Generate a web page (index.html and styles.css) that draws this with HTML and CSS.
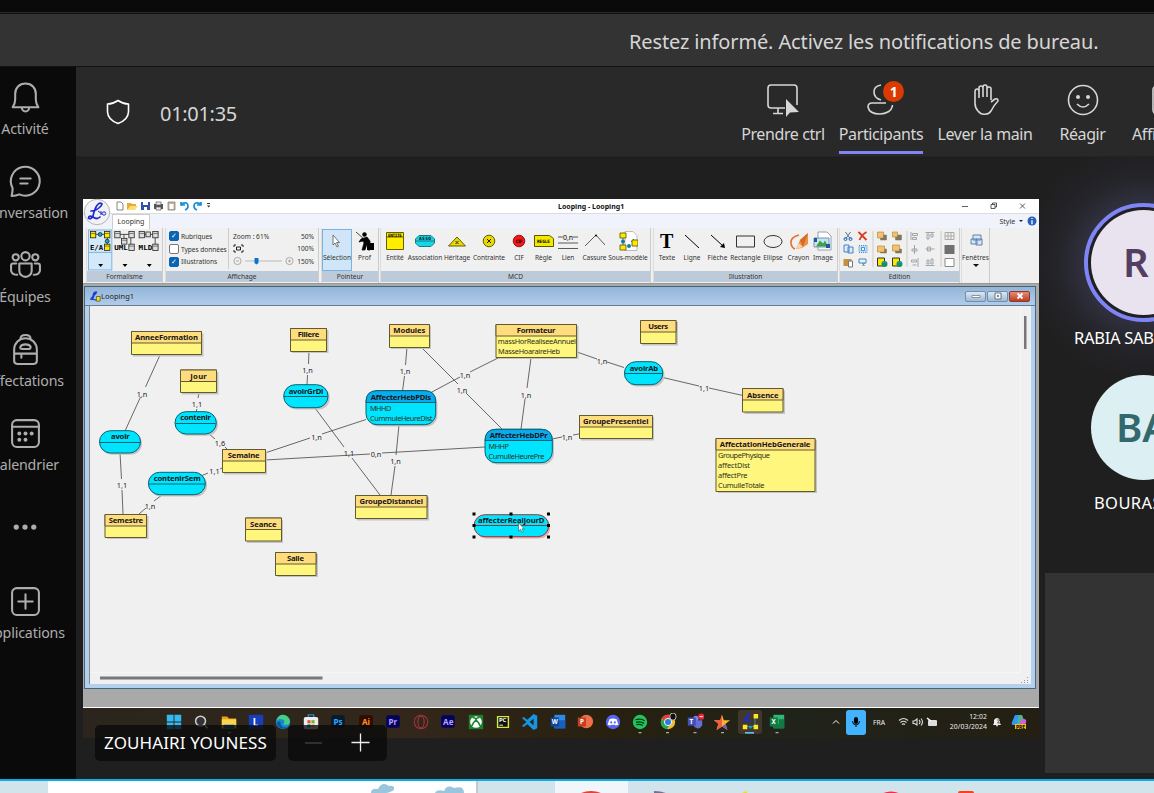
FILE: index.html
```html
<!DOCTYPE html>
<html lang="fr">
<head>
<meta charset="utf-8">
<title>Réunion</title>
<link rel="stylesheet" href="styles.css">
</head>
<body>
<div class="strip"></div>
<div class="notice"><span>Restez informé. Activez les notifications de bureau.</span></div>
<div class="main">
  <nav class="rail">
    <a class="rail-item"><svg viewBox="0 0 32 32"><path d="M3.500 25.500Q6 22 6 18V12.500C6 6.500 10 2.500 16 2.500s10 4 10 10V18Q26 22 28.500 25.500ZM12.500 26a3.500 3.500 0 0 0 7 0"/></svg><span>Activité</span></a>
    <a class="rail-item"><svg viewBox="0 0 32 32"><path d="M2.500 30Q3.500 26 3.500 22.500A14 14 0 1 1 10 28.500Q7 30 2.500 30ZM11 13H21M11 18H18"/></svg><span>Conversation</span></a>
    <a class="rail-item"><svg viewBox="0 0 32 32"><circle cx="16" cy="7" r="4"/><circle cx="6.500" cy="8" r="3"/><circle cx="25.500" cy="8" r="3"/><path d="M10 14H22V21a6 6 0 0 1-12 0ZM7 14H4Q2 14 2 16V21Q3 25 8 25M25 14H28Q30 14 30 16V21Q29 25 24 25"/></svg><span>Équipes</span></a>
    <a class="rail-item"><svg viewBox="0 0 32 32"><path d="M5 27V16a11 11 0 0 1 22 0V27Q27 30 24 30H8Q5 30 5 27ZM11 6Q11 2 16 2t5 4M5 20H27M12 20V24M13 15.500Q10.500 15.500 11 13.500 12 11 16 11t5 2.500Q21 15.500 19 15.500Z"/></svg><span>Affectations</span></a>
    <a class="rail-item"><svg viewBox="0 0 32 32"><rect x="3" y="3" width="26" height="26" rx="4.500"/><path d="M3 9.500H29"/><g class="dots"><circle cx="10" cy="16" r="1.900"/><circle cx="16" cy="16" r="1.900"/><circle cx="22" cy="16" r="1.900"/><circle cx="10" cy="22" r="1.900"/><circle cx="16" cy="22" r="1.900"/></g></svg><span>Calendrier</span></a>
    <a class="rail-item more"><svg viewBox="0 0 32 32"><g class="dots"><circle cx="6" cy="16" r="3"/><circle cx="16" cy="16" r="3"/><circle cx="26" cy="16" r="3"/></g></svg></a>
    <a class="rail-item"><svg viewBox="0 0 32 32"><rect x="3" y="3" width="26" height="26" rx="4.500"/><path d="M16 9V23M9 16H23"/></svg><span>Applications</span></a>
  </nav>
  <section class="meeting">
    <header class="bar">
      <svg class="shield" viewBox="0 0 24 26"><path d="M12 1.500Q17 5 22.500 5V13Q22 21 12 24.500 2 21 1.500 13V5Q7 5 12 1.500Z"/></svg>
      <span class="timer">01:01:35</span>
      <div class="controls">
        <a class="control"><svg viewBox="0 0 34 34"><path d="M19 25H5Q2 25 2 22V5Q2 2 5 2H28Q31 2 31 5V22M12 25V30M7 30.500H17"/><path class="arrow" d="M20 16V34L24 29.500 33 29Z"/></svg><span>Prendre ctrl</span></a>
        <a class="control active"><svg viewBox="0 0 34 34"><path d="M17 2Q10 3 10 9t7 8M22 20H8Q4 20 4 24C5 29 10 31 16 31S28 28 28.500 22"/></svg><b class="badge">1</b><span>Participants</span></a>
        <a class="control"><svg viewBox="0 0 34 34"><path d="M7 20V9Q7 6 9 6T11 9V15M11 9V5Q11 3 13 3T15 5V14M15 5V4Q15 2 17 2T19 4V14M19 6Q19 4 21 4T23 6V17M23 19L27 16Q30 15 30 18C28 20 25 24 23 28Q21 31 18 31 13 32 10 28 7 25 7 20"/></svg><span>Lever la main</span></a>
        <a class="control"><svg viewBox="0 0 34 34"><circle cx="17" cy="17" r="14.500"/><path d="M11 21Q17 27 23 21"/><g class="dots"><circle cx="12" cy="14" r="2"/><circle cx="22" cy="14" r="2"/></g></svg><span>Réagir</span></a>
        <a class="control"><svg viewBox="0 0 34 34"><rect x="2" y="3" width="30" height="28" rx="4"/></svg><span>Affichage</span></a>
      </div>
    </header>
    <div class="content">
      <div class="share">
        <div class="titlebar">
          <svg class="quick" viewBox="112 199 102 14">
            <path fill="#fff" stroke="#555" stroke-width=".7" d="M117 202h4l2 2v6h-6Z"/>
            <path fill="#e9aa35" d="M127 203h4l1 1h4v2l-2 4h-7Z"/><path fill="#ffdb78" d="M130 206h8l-3 4h-8Z"/>
            <path fill="#3450a8" d="M141 202h9v8h-9Z"/><path fill="#fff" d="M143 202h5v3h-5zM144 207h3v3h-3Z"/>
            <path fill="#555" d="M154 204h9v5h-9Z"/><path fill="#eee" stroke="#555" stroke-width=".7" d="M156 202h5v3h-5zM156 207h5v3h-5Z"/>
            <path fill="#c7b797" stroke="#777" stroke-width=".7" d="M168 202h7v8h-7Z"/><path fill="#fff" d="M169.500 204h4v5h-4Z"/>
            <path fill="none" stroke="#168ed5" stroke-width="1.700" d="M181 202v3h4M181 204q7-3 7 2 0 3-3 4M201 202v3h-4M201 204q-7-3-7 2 0 3 3 4"/>
            <path fill="#333" d="M207 203h3v1h-3zM207 205.500h3.400l-1.700 2Z"/>
          </svg>
          <strong>Looping - Looping1</strong>
          <svg class="winbtns" viewBox="0 0 70 14"><path d="M0 7.500H6M29 5.500h4v4h-4zM30.500 5.500v-1.500h4v4h-1.500M58 4.500l5 5M63 4.500l-5 5"/></svg>
        </div>
        <div class="tabstrip"><span class="tab">Looping</span><span class="style">Style <i></i></span><svg class="info" viewBox="0 0 10 10"><circle cx="5" cy="5" r="4.500" fill="#2761b9"/><path d="M5 2v1M5 4.200v4" stroke="#fff" stroke-width="1.300"/></svg></div>
        <svg class="orb" viewBox="0 0 28 28"><circle cx="14" cy="14" r="12.700" fill="#f2f2f4" stroke="#b5b5ba"/><path d="M19 6Q16 3.500 13 9 11 13 10 18 8 22 5.500 20 5.500 17 10 19 14 22 17 19M8 13Q13 13 17 9 20 6 18 5.500" fill="none" stroke="#1c2bd0" stroke-width="1.700" stroke-linecap="round"/><path d="M15 13l4 3m-1-3v4" stroke="#1c2bd0"/><circle cx="21" cy="15.500" r="1.700" fill="none" stroke="#1c2bd0"/></svg>
        <div class="ribbon">
          <section class="group formalism">
            <svg class="body" viewBox="86 228 77 43">
              <rect x="87.500" y="229.500" width="24" height="41" fill="#d3e8f8" stroke="#78b4e2"/><path d="M88 252.500h23" stroke="#78b4e2"/>
              <g stroke="#222" stroke-width=".8"><path fill="none" d="M93 234h14v12"/><g fill="#ffe600"><rect x="89.500" y="231" width="5.500" height="6.500"/><rect x="104" y="231" width="5.500" height="6.500"/><rect x="104" y="244" width="5.500" height="6.500"/></g><g fill="#16a8c8"><circle cx="99.500" cy="234" r="2"/><circle cx="106.700" cy="241" r="2"/></g>
              <g fill="#ddd"><path fill="none" d="M117 234h14v11M124 234v5"/><rect x="114.500" y="231" width="5.500" height="6.500"/><rect x="129" y="231" width="5.500" height="6.500"/><rect x="121.500" y="238" width="5.500" height="6"/><rect x="129" y="244" width="5.500" height="6.500"/><path fill="none" d="M142 234h14v12"/><rect x="139.500" y="231" width="5.500" height="6.500"/><rect x="146.500" y="231.500" width="4.500" height="5"/><rect x="153.500" y="231" width="5.500" height="6.500"/><rect x="153.500" y="244" width="5.500" height="6.500"/></g></g>
              <path stroke="#333" stroke-width=".6" d="M90 233h5m9 0h5m-5 13h5M115 233h5m9 0h5m-12 7h5m2 6h5M140 233h5m9 0h5m-5 13h5"/>
              <g class="pixel"><text x="89" y="250.500" textLength="13.500" lengthAdjust="spacingAndGlyphs">E/A</text><text x="114" y="250.500" textLength="14" lengthAdjust="spacingAndGlyphs">UML</text><text x="139" y="250.500" textLength="14" lengthAdjust="spacingAndGlyphs">MLD</text></g>
              <path d="M97.500 264.500h5l-2.500 3zM122.500 264.500h5l-2.500 3zM147.500 264.500h5l-2.500 3z"/>
            </svg>
            <footer>Formalisme</footer>
          </section>
          <section class="group display">
            <div class="body view-body">
              <div class="checks"><label><i class="on">✓</i>Rubriques</label><label><i></i>Types données</label><label><i class="on">✓</i>Illustrations</label></div>
              <div class="zoom"><span>Zoom : 61%</span><span>50%</span>
                <svg viewBox="0 0 11 9" class="fit"><path d="M1 3V1h2M8 1h2v2M10 6v2H8M3 8H1V6M3.500 3h4v3h-4z"/></svg><span>100%</span>
                <svg viewBox="0 0 61 10" class="slider"><g fill="none" stroke="#999" stroke-width=".8"><circle cx="4.500" cy="5" r="3.600"/><circle cx="56.500" cy="5" r="3.600"/><path d="M3 5h3M55 5h3M56.500 3.500v3"/></g><path d="M12 5h37" stroke="#bbb"/><path d="M21.500 2h4v5l-2 1.500-2-1.500z" fill="#0c73cf"/></svg><span>150%</span></div>
            </div>
            <footer>Affichage</footer>
          </section>
          <section class="group pointer">
            <div class="body tools">
              <a class="tool selected"><svg viewBox="0 0 20 20"><path d="M6 4v10l2-2 2 4 1.500-.8-2-3.700h3Z" fill="#fff" stroke="#555" stroke-width=".8"/></svg>Sélection</a>
              <a class="tool"><svg viewBox="0 0 20 20"><path d="M1 1l8 7M6 8l6-2 3 4v9h-2l-1-6-2 6H7l2-7-1-2-4 1Z" stroke="#000" stroke-width=".7"/><circle cx="9.500" cy="3.500" r="2.200"/><path d="M12 12h7v7h-7z"/></svg>Prof</a>
            </div>
            <footer>Pointeur</footer>
          </section>
          <section class="group mcd">
            <div class="body tools">
              <a class="tool"><svg viewBox="0 0 20 20"><path d="M1.500 1.500h17v17h-17zM1.500 6h17" fill="#ffee00" stroke="#665f00"/><text class="pixel" x="3" y="5.500" textLength="14">ENTITE</text></svg>Entité</a>
              <a class="tool"><svg viewBox="0 0 20 20"><path d="M4 4.500h12l3.500 3.500v4l-3.500 3.500H4L.5 12V8Z" fill="#16d5e5" stroke="#147b87"/><path d="M0 10h20" stroke="#147b87"/><text class="pixel" x="4" y="9" textLength="12">ASSO</text></svg>Association</a>
              <a class="tool"><svg viewBox="0 0 20 20"><path d="M1.500 15L10 6l8.500 9Z" fill="#e8da00" stroke="#655e00"/><path d="M8.500 10l3 3m0-3l-3 3" stroke="#333"/></svg>Héritage</a>
              <a class="tool"><svg viewBox="0 0 20 20"><circle cx="10" cy="10" r="5.800" fill="#e8da00" stroke="#655e00"/><path d="M8 8l4 4m0-4l-4 4" stroke="#222"/></svg>Contrainte</a>
              <a class="tool"><svg viewBox="0 0 20 20"><circle cx="10" cy="10" r="5.800" fill="#f31616" stroke="#971919"/><text class="pixel" x="6.500" y="11.500" textLength="7">CIF</text></svg>CIF</a>
              <a class="tool"><svg viewBox="0 0 20 20"><path d="M.5 4.500h15l4 3v8H.5Z" fill="#f2e800" stroke="#5b5700"/><text class="pixel" x="3" y="12" textLength="13">REGLE</text></svg>Règle</a>
              <a class="tool"><svg viewBox="0 0 20 20"><path d="M0 6h5m10 0h5M0 12h20M0 17.500h20" stroke="#333" stroke-width=".8"/><text x="5" y="8.500" font-size="7" textLength="10">0,n</text></svg>Lien</a>
              <a class="tool"><svg viewBox="0 0 20 20"><path d="M0 15L11 4l9 10" fill="none" stroke="#333" stroke-width=".8"/><circle cx="11" cy="4.500" r="1"/></svg>Cassure</a>
              <a class="tool"><svg viewBox="0 0 20 20"><path d="M7 .5h8l4 4v15H7z" fill="#fff" stroke="#bbb"/><path d="M5 6v8M13 11l3-3" stroke="#1688a8"/><g fill="#ffe800" stroke="#554f00" stroke-width=".8"><path d="M2 2h6v5H2zM2 14h6v5H2zM14 9h6v6h-6z"/></g><circle cx="5" cy="10.500" r="2" fill="#127da4"/><circle cx="11" cy="15" r="2" fill="#127da4"/></svg>Sous-modèle</a>
            </div>
            <footer>MCD</footer>
          </section>
          <section class="group illus">
            <div class="body tools">
              <a class="tool"><svg viewBox="0 0 20 20"><text x="3" y="17" font-size="20" font-weight="bold" class="serif">T</text></svg>Texte</a>
              <a class="tool"><svg viewBox="0 0 20 20"><path d="M3 4l14 13" stroke="#000"/></svg>Ligne</a>
              <a class="tool"><svg viewBox="0 0 20 20"><path d="M3 4l12 11" stroke="#000"/><path d="M17 17l-5-1 4-4z"/></svg>Flèche</a>
              <a class="tool"><svg viewBox="0 0 20 20"><path d="M.5 5h18v11H.5z" fill="none" stroke="#333"/></svg>Rectangle</a>
              <a class="tool"><svg viewBox="0 0 20 20"><ellipse cx="10" cy="10.500" rx="9" ry="6" fill="none" stroke="#333"/></svg>Ellipse</a>
              <a class="tool"><svg viewBox="0 0 20 20"><path d="M10 4Q1 6 2 13q1 4 4 5" fill="none" stroke="#e76b35" stroke-width="1.500"/><path d="M7 18l4-9L19 2v11l-6 4Z" fill="#ed9240"/><path d="M7 18l2.500-6 4.500 4Z" fill="#f4d3ad"/><path d="M11 9l8-7-5 14Z" fill="#d96a26"/></svg>Crayon</a>
              <a class="tool"><svg viewBox="0 0 20 20"><path d="M5 1h9l4 4v14H5z" fill="#fff" stroke="#8ba4b5"/><path d="M1 7h15v9H1z" fill="#c5e3f4" stroke="#7a94ad"/><path d="M3 15.500l4-6 3 3 2-3 3 6Z" fill="#3ca246"/><path d="M1 7h3v4H1zM13 13h4v4h-4z" fill="#27559d"/></svg>Image</a>
            </div>
            <footer>Illustration</footer>
          </section>
          <section class="group edit">
            <svg class="body" viewBox="839.500 228 119 43">
              <path d="M872.500 231v36M906.500 231v36M940.500 231v36" stroke="#ccc"/>
              <path d="M845 232l5 7M850 232l-5 7" stroke="#57718e"/><circle cx="845" cy="239" r="1.500" fill="none" stroke="#2561bd"/><circle cx="850" cy="239" r="1.500" fill="none" stroke="#2561bd"/>
              <path d="M858 232l8 8m0-8q-5 3-7 8" stroke="#d63b20" stroke-width="1.800" fill="none"/>
              <path d="M843.500 245h5v7h-5zM847.500 247h5v6h-5z" fill="#dcebff" stroke="#4d83c2"/><path d="M858.500 245.500h8v7h-8z" fill="#bcdcf7" stroke="#4a91cd" stroke-dasharray="1 1"/><path d="M861 247.500h3v3h-3z" fill="#fff" stroke="#4a91cd"/>
              <path d="M843 259h8v7h-8z" fill="#c3923f"/><path d="M848 261h4v6h-4z" fill="#fff" stroke="#777"/><path d="M858.500 259h7v4h-7zM862 263l2 3m0-3l-2 3" fill="#e4f2ff" stroke="#4987b4"/>
              <g stroke="#987126" stroke-width=".5"><path d="M880 235h6v5h-6zM895 235h6v5h-6zM880 249h6v4h-6zM895 249h6v4h-6z" fill="#777"/><path d="M877 232h6v6h-6zM892 232h5v5h-5zM877 246h7v6h-7zM892 245h7v6h-7z" fill="#f2c36a"/></g>
              <path d="M877 258h7v8h-7zM892 258h7v8h-7z" fill="#f6e800" stroke="#333"/><circle cx="884" cy="264" r="3" fill="#159257"/><circle cx="899" cy="264" r="3" fill="#159257"/><path d="M882 263q2-2 4 0M897 263q2-2 4 0" fill="none" stroke="#3183ed"/>
              <g fill="none" stroke="#9da6ae"><path d="M910.500 232v8M912 233.500h5v2h-5zM912 237.500h4v2h-4zM925 232.500h9M926.500 234v5h2v-5zM930.500 234v3h2v-3zM914 245v9M911.500 251h5v-2h-5zM925 249h9M927 247v4h3v-4zM917.500 258v9M911 262h5v-2h-5zM912 265h4M925 265.500h9M926.500 264v-4h2v4zM930.500 264v-5h2v5z"/></g>
              <path d="M944.500 232.500h9v7h-9zM944.500 236h9M947.500 232v8M950.500 232v8" fill="none" stroke="#aaa"/><path d="M944 245h10v9h-10z" fill="#707070"/><path d="M944.500 258.500h9v8h-9z" fill="#fff" stroke="#888"/>
            </svg>
            <footer>Edition</footer>
          </section>
          <section class="group windows"><svg viewBox="0 0 20 20"><path d="M7 4h8v5H7zM5 8h6v5H5zM10 8h6v6h-6z" fill="#d7e7f8" stroke="#6283ab"/></svg><span>Fenêtres</span><i></i></section>
        </div>
        <div class="mdi">
          <div class="child">
            <div class="child-title"><svg viewBox="0 0 12 12"><path d="M5 1Q3 3 3 9M1 8Q8 2 7 1T4 6q-1 4-3 3t6 1" fill="none" stroke="#1e3fcb" stroke-width="1.300"/><path d="M7 6h4v5H7z" fill="#ffe500" stroke="#333" stroke-width=".7"/></svg><span>Looping1</span>
              <div class="buttons"><b><svg viewBox="0 0 10 8"><path d="M1 3.500h8v2H1z" fill="#fff" stroke="#65727f" stroke-width=".7"/></svg></b><b><svg viewBox="0 0 10 8"><path d="M2 1h6v6H2z" fill="#fff" stroke="#65727f"/><path d="M4 3h2v2H4z" fill="#789"/></svg></b><b class="close"><svg viewBox="0 0 10 8"><path d="M2.500 1.500l5 5m0-5l-5 5" stroke="#fff" stroke-width="1.800"/></svg></b></div>
            </div>
            <svg class="diagram" viewBox="90 306 941 378">
              <g class="links">
                <path d="M160 355L145.500 387M140.500 397L125 431M120 453L121.500 479M122 490L123 514M199 393L198 398M197 409L196 412M209 434L215 439M225 447L228 450M222 468L220 469M208 473L201 476M162 495L154 501M146 508L139 514M309 351L308.500 364M307.500 375L307 385M315 408L344 447M352 458L380 495M265 453L310 438M322 434L366 419.500M265 460L370 454M382 453L485 447M407 347L405.500 365M404.500 376L402.500 391M421 347L458 384M466 393L502 429M498 358L470 372M460 377L431 392.500M531 358L527 388M525 399L521 429M552 439L562 437M573 435L579 434M399 425L396 455M395 466L391 495M577 352L597 359M607 362L624 367.500M663 377.500L699 386M709 388L743 395.500"/>
                <g class="mult"><text x="142" y="397">1,n</text><text x="122" y="488">1,1</text><text x="197" y="407">1,1</text><text x="220" y="446">1,6</text><text x="214.500" y="474">1,1</text><text x="150" y="509">1,n</text><text x="307.500" y="372.500">1,n</text><text x="349" y="456">1,1</text><text x="316.500" y="439.500">1,n</text><text x="376" y="456.500">0,n</text><text x="405" y="373.500">1,n</text><text x="462" y="392.500">1,n</text><text x="465" y="378">1,n</text><text x="526" y="397.500">1,n</text><text x="567" y="439.500">1,n</text><text x="395.500" y="464">1,n</text><text x="602" y="364">1,n</text><text x="704" y="390.500">1,1</text></g>
              </g>
              <g class="shadow"><path d="M133 333.500h70.500v23H133zM182 372h36.500v22.500H182zM292 330h36.500v23H292zM224 451.500h43v23h-43zM107 516h41.500v23H107zM247 520h36v23h-36zM277.500 554h40.500v23h-40.500zM391 326h40v23h-40zM498 326h80.500v33H498zM357 497h72v23.500h-72zM642 322h36v23.500h-36zM744.500 390.500h40.500v23.500h-40.500zM581 417h73v23.500h-73zM718 440h99v53h-99z"/>
                <rect x="101" y="432.500" width="41" height="22.300" rx="11"/><rect x="176.700" y="413.500" width="41.300" height="22.300" rx="11"/><rect x="150" y="474" width="57" height="22.400" rx="11"/><rect x="285.400" y="386.500" width="44.300" height="23" rx="11"/><rect x="367.700" y="392.500" width="69.700" height="34" rx="11"/><rect x="486.700" y="431" width="67.300" height="33.500" rx="11"/><rect x="626" y="363.500" width="38.400" height="23" rx="11"/></g>
              <g class="entities"><path d="M131.500 331.500h70v23h-70zM180.500 370h36v22.500h-36zM290.500 328.500h36v23h-36zM222.500 449.500h43v23h-43zM105 514.500h41.500v23H105zM245.500 518h36v23h-36zM275.500 552.500h40.500v23h-40.500zM389.500 324.500h40v23h-40zM496 324.500h80.500v33H496zM355.500 495.500H427v23h-71.500zM640.500 320.500H676v23h-35.500zM742.500 388.500h40.500v23.500h-40.500zM579.500 415.500h73v23h-73zM716 438.500h99v53h-99z"/>
                <path class="head" d="M131.500 331.500h70v11.500h-70zM180.500 370h36v11.500h-36zM290.500 328.500h36v11.500h-36zM222.500 449.500h43V461h-43zM105 514.500h41.500v11.500H105zM245.500 518h36v11.500h-36zM275.500 552.500h40.500v11.500h-40.500zM389.500 324.500h40V336h-40zM496 324.500h80.500V336H496zM355.500 495.500H427V507h-71.500zM640.500 320.500H676V332h-35.500zM742.500 388.500h40.500v11.500h-40.500zM579.500 415.500h73V427h-73zM716 438.500h99V450h-99z"/></g>
              <g class="assocs"><rect x="99.500" y="430.700" width="41" height="22.300" rx="11.100"/><rect x="175" y="411.700" width="41.300" height="22.300" rx="11.100"/><rect x="148.400" y="472.300" width="57" height="22.400" rx="11.200"/><rect x="283.700" y="384.700" width="44.300" height="23" rx="11.500"/><rect x="366" y="390.700" width="69.700" height="34" rx="11"/><rect x="485" y="429.300" width="67.300" height="33.400" rx="11"/><rect x="624.400" y="361.700" width="38.400" height="23" rx="11.500"/>
                <path d="M100 442.500h40M175.500 423.500h40M149 484h56M284 396.500h43.500M625 373.500h37.500"/>
                <path class="strong" d="M366 402.500v-1q0-10.800 11-10.800h47.700q11 0 11 10.800v1zM485 440.500q0-11.200 11-11.200h45.300q11 0 11 11.200z"/></g>
              <rect x="475.500" y="516.500" width="74.700" height="22" rx="11" fill="#e8a9a9"/><g class="picked"><rect x="474" y="514.700" width="74.700" height="22" rx="11"/><path d="M475 525.500h73"/></g>
              <path d="M472.500 512.500h3v3h-3zM509.500 512.500h3v3h-3zM547 512.500h3v3h-3zM472.500 524h3v3h-3zM547 524h3v3h-3zM472.500 535.500h3v3h-3zM509.500 535.500h3v3h-3zM547 535.500h3v3h-3z"/>
              <g class="names"><text x="135" y="340" textLength="63">AnneeFormation</text><text x="190.300" y="378.500" textLength="16.500">Jour</text><text x="297.700" y="336.800" textLength="21.700">Filiere</text><text x="227.700" y="458" textLength="32">Semaine</text><text x="108.700" y="522.500" textLength="34.500">Semestre</text><text x="250" y="526.500" textLength="26.500">Seance</text><text x="287" y="561" textLength="17">Salle</text><text x="393.300" y="332.800" textLength="32">Modules</text><text x="516.700" y="332.800" textLength="38.700">Formateur</text><text x="359.500" y="503.800" textLength="63.500">GroupeDistanciel</text><text x="648.300" y="329" textLength="19.700">Users</text><text x="747" y="397.500" textLength="31.500">Absence</text><text x="583" y="424" textLength="65.500">GroupePresentiel</text><text x="719.700" y="447" textLength="90.700">AffectationHebGenerale</text>
                <text x="111" y="439.200" textLength="18.800">avoir</text><text x="180.300" y="420.200" textLength="30.700">contenir</text><text x="153.700" y="481" textLength="47">contenirSem</text><text x="288.700" y="393.800" textLength="34.700">avoirGrDi</text><text x="370.700" y="400" textLength="60.500">AffecterHebPDis</text><text x="489.700" y="438" textLength="58">AffecterHebDPr</text><text x="629.700" y="371" textLength="28.500">avoirAb</text><text x="478" y="523" textLength="66.500">affecterRealjourD</text></g>
              <g class="attrs"><text x="497.700" y="344.300" textLength="78.300">massHorRealiseeAnnuel</text><text x="498" y="354" textLength="62">MasseHoaraireHeb</text><text x="370" y="411" textLength="21.300">MHHD</text><text x="370" y="421" textLength="62.500">CummuleHeureDist</text><text x="488.500" y="449" textLength="20.500">MHHP</text><text x="488.500" y="459" textLength="56">CumulleHeurePre</text><text x="718" y="458" textLength="52">GroupePhysique</text><text x="718" y="468" textLength="32">affectDist</text><text x="718" y="478" textLength="29.500">affectPre</text><text x="718" y="487.700" textLength="46.500">CumulleTotale</text></g>
              <path d="M518.500 523v8l2-1.700 1.500 3 1.300-.7-1.400-2.800h2.500Z" fill="#fff" stroke="#333" stroke-width=".5"/>
              <path d="M100 676.500h222.500v3H100zM1024 316h2.500v33H1024z" fill="#777"/><path d="M90 672.500h930.500V306" fill="none" stroke="#f6f6f6"/>
              <path d="M1027 677h1v1h-1zM1024 680h1v1h-1zM1027 680h1v1h-1zM1021 682h1v1h-1zM1024 682h1v1h-1zM1027 682h1v1h-1z" fill="#999"/>
            </svg>
          </div>
        </div>
        <div class="taskbar">
          <div class="apps">
            <svg viewBox="0 0 20 20"><path fill="#35b9f2" d="M2 2h7.500v7.500H2zM10.500 2H18v7.500h-7.500zM2 10.500h7.500V18H2zM10.500 10.500H18V18h-7.500z"/></svg>
            <svg viewBox="0 0 20 20"><circle cx="9.500" cy="9" r="5.500" fill="#333" stroke="#ccc" stroke-width="1.700"/><path d="M13.500 13l4 4" stroke="#ccc" stroke-width="1.700"/></svg>
            <svg viewBox="0 0 20 20"><path d="M2 4h6l2 2h8v11H2z" fill="#e6a11d"/><path d="M2 7h16v10H2z" fill="#ffd34d"/><path d="M4 13h12v4H4z" fill="#195b94"/></svg>
            <svg viewBox="0 0 20 20"><path d="M2 2h16v16H2z" fill="#173fba"/><text x="6.500" y="14" class="app-t" font-size="11" fill="#fff">L</text></svg>
            <svg viewBox="0 0 20 20"><circle cx="10" cy="10" r="8" fill="#1687d1"/><path d="M3 7Q8-1 15 4q5 5 1 9h-6q4-5-2-6Q5 6 3 9Z" fill="#45cf84"/><path d="M7 10q0 7 8 6Q8 20 4 14Q2 8 7 10Z" fill="#0c559d"/></svg>
            <svg viewBox="0 0 20 20"><path d="M7 6V2h6v4" fill="none" stroke="#248bcc" stroke-width="1.500"/><rect x="2" y="4.500" width="16" height="13.500" rx="2" fill="#eee"/><path d="M6 8h3.500v3.500H6z" fill="#ed512f"/><path d="M10.500 8H14v3.500h-3.500z" fill="#6cb52e"/><path d="M6 12.500h3.500V16H6z" fill="#2094df"/><path d="M10.500 12.500H14V16h-3.500z" fill="#f4b726"/></svg>
            <svg viewBox="0 0 20 20"><rect x="2.500" y="2.500" width="15" height="14" rx="2.500" fill="#07192d"/><text x="5" y="13" class="app-t" fill="#31a8ff">Ps</text></svg>
            <svg viewBox="0 0 20 20"><rect x="2.500" y="2.500" width="15" height="14" rx="2.500" fill="#310a00"/><text x="5.500" y="13" class="app-t" fill="#ff9518">Ai</text></svg>
            <svg viewBox="0 0 20 20"><rect x="2.500" y="2.500" width="15" height="14" rx="2.500" fill="#03035b"/><text x="5" y="13" class="app-t" fill="#b8a0ff">Pr</text></svg>
            <svg viewBox="0 0 20 20"><g fill="none" stroke="#a5343c" stroke-width="1.200"><circle cx="10" cy="10" r="7.500"/><ellipse cx="10" cy="10" rx="3.500" ry="6.500"/></g></svg>
            <svg viewBox="0 0 20 20"><rect x="2.500" y="2.500" width="15" height="14" rx="2.500" fill="#03035b"/><text x="4.500" y="13" class="app-t" fill="#b8a0ff">Ae</text></svg>
            <svg viewBox="0 0 20 20"><path d="M2 2h16v16H2z" fill="#16822c"/><circle cx="10" cy="10" r="6.500" fill="#fff"/><path d="M5 15Q7 10 10 8q3 2 5 7M6 5q3 0 4 2 1-2 4-2" fill="none" stroke="#16822c" stroke-width="1.800"/></svg>
            <svg viewBox="0 0 20 20"><path d="M4 4h12v12H4z" fill="#111" stroke="#d4e83e" stroke-width="1.600"/><text x="5.500" y="10.500" class="app-t" font-size="6.500" fill="#fff">PC</text><path d="M6 13.500h4" stroke="#fff"/></svg>
            <svg viewBox="0 0 20 20"><path d="M14 1l4 2v14l-4 2L7 12.500l-4 3-2-1L6 10 1 5.500l2-1 4 3ZM14 6.500L9.500 10l4.500 3.500Z" fill="#1695e4" fill-rule="evenodd"/></svg>
            <svg viewBox="0 0 20 20"><path d="M6 2h12v15H6z" fill="#2d8bea"/><path d="M6 8h12v9H6z" fill="#1860bd"/><path d="M2 5h9v10H2z" fill="#0f4698"/><text x="3" y="12.500" class="app-t" font-size="7" fill="#fff">W</text></svg>
            <svg viewBox="0 0 20 20"><circle cx="11.500" cy="9.500" r="7.500" fill="#ed704b"/><path d="M2 5h9v10H2z" fill="#c43e1c"/><text x="4.500" y="12.500" class="app-t" font-size="7" fill="#fff">P</text></svg>
            <svg viewBox="0 0 20 20"><circle cx="10" cy="10" r="8" fill="#5865f2"/><path d="M6 7q4-2 8 0l2 6-3 1-1-1H8l-1 1-3-1Z" fill="#fff"/><circle cx="8" cy="10.500" r="1.200" fill="#5865f2"/><circle cx="12" cy="10.500" r="1.200" fill="#5865f2"/></svg>
            <svg viewBox="0 0 20 20"><circle cx="10" cy="10" r="8" fill="#1fc75b"/><path d="M5 7.500q6-2 10 1M5.500 10.500q5-1.500 9 1M6 13q4-1 7 1" fill="none" stroke="#082b14" stroke-width="1.400"/></svg>
            <svg viewBox="0 0 20 20"><circle cx="10" cy="10" r="8" fill="#f2bd31"/><path d="M3 6a8 8 0 0 1 14 0h-7l-3 6Z" fill="#e64032"/><path d="M3 6a8 8 0 0 0 6 12l4-7-6 1Z" fill="#29a652"/><circle cx="10" cy="10" r="4" fill="#267de0" stroke="#fff"/><ellipse cx="15.500" cy="4" rx="3.500" ry="4" fill="#111" stroke="#ccc"/></svg>
            <svg viewBox="0 0 20 20"><circle cx="11" cy="6" r="3" fill="#7b83eb"/><path d="M7 8h11v6q-4 6-9 1Z" fill="#656ed2"/><path d="M2 5h9v9H2z" fill="#4650b5"/><text x="4" y="12" class="app-t" font-size="7" fill="#fff">T</text><circle cx="17" cy="4" r="3.500" fill="#e12737"/><path d="M15 4h4" stroke="#fff"/></svg>
            <svg viewBox="0 0 20 20"><path d="M10 2l2 6h7l-5 4 2 7-6-4-6 4 2-7-5-4h7Z" fill="#ffb32d"/><path d="M10 2v13l-6 4 2-7-5-4h7Z" fill="#f35b44"/><path d="M10 15l6 4-2-7Z" fill="#7357b9"/></svg>
            <svg class="current" viewBox="0 0 20 20"><path d="M5 15h10M15.500 6v8" stroke="#149cc3"/><path d="M14 1h5v5h-5zM2 13h5v5H2zM14 13h5v5h-5z" fill="#ffe821"/><circle cx="10.500" cy="15.500" r="1.700" fill="#149cc3"/><path d="M9 1Q6 4 5 9M2 9Q10 2 9 1T6 8l5 1" fill="none" stroke="#1d2ec4" stroke-width="2"/></svg>
            <svg viewBox="0 0 20 20"><path d="M6 2h12v15H6z" fill="#2eb777"/><path d="M12 7h6v10H6v-5h6z" fill="#137746"/><path d="M2 5h9v10H2z" fill="#107c41"/><text x="4" y="12.500" class="app-t" font-size="7" fill="#fff">X</text></svg>
          </div>
          <svg class="marks" viewBox="160 732 640 3"><path d="M228 732.500h3M638.500 732.500h3M666 732.500h3M693.500 732.500h3M721 732.500h3M775.500 732.500h3" stroke="#aaa" stroke-width="1.500"/><path d="M745 732.700h9" stroke="#55bdf7" stroke-width="2"/></svg>
          <div class="tray">
            <svg class="chev" viewBox="0 0 8 8"><path d="M1 5.500l3-3 3 3" fill="none" stroke="#fff"/></svg>
            <span class="mic"><svg viewBox="0 0 10 12"><rect x="3" y="1" width="4" height="7" rx="2"/><path d="M1.500 5q0 4 3.500 4t3.500-4M5 9v2" fill="none" stroke="#06121b"/></svg></span>
            <span class="lang">FRA</span>
            <svg class="status" viewBox="0 0 41 12"><g fill="none" stroke="#ddd" stroke-width="1.100"><path d="M1 4.500q4.500-4 9 0M2.500 6.500q3-2.500 6 0M4 8.500q1.500-1.200 3 0M21 4q2 2 0 4M23 2.500q3 3.500 0 7"/><path d="M15 5h1.500L19 3v6L16.500 7.500H15Z"/></g><path d="M31 4h7q1 0 1 1v4q0 1-1 1h-7q-1 0-1-1V5q0-1 1-1Z" fill="#ddd"/><path d="M29 2l4 3" stroke="#fff" stroke-width="1.500"/></svg>
            <time><span>12:02</span><span>20/03/2024</span></time>
            <svg class="bell" viewBox="0 0 10 12"><path d="M1 9l1-2V4q3-4 6 0v3l1 2H6L5 11 4 9Z" fill="#eee"/><path d="M5 4h3L5.500 7H8" fill="none" stroke="#333" stroke-width=".8"/></svg>
            <svg class="copilot" viewBox="0 0 16 16"><path d="M4 1h5L6 11H2Q0 11 1 8Z" fill="#3595ef"/><path d="M8 1h3l2 5-3 7H5Z" fill="#43bc8c"/><path d="M10 5h3q3 0 2 4l-2 4H8Z" fill="#d55fd0"/><path d="M4 10h11v5H4z" fill="#f6bb20"/><text x="5" y="14.500" class="app-t" font-size="5" textLength="9">PRE</text></svg>
          </div>
        </div>
        <div class="pill presenter"><span>ZOUHAIRI YOUNESS</span></div>
        <div class="pill zoomer"><svg viewBox="0 0 99 36"><path d="M17 18h17" stroke="#444" stroke-width="1.300"/><path d="M63.500 17.500h18M72.500 8.500v18" stroke="#eee" stroke-width="1.300"/></svg></div>
      </div>
      <aside class="people">
        <figure class="person speaking"><div class="avatar"><span>RS</span></div><figcaption>RABIA SABRI</figcaption></figure>
        <figure class="person second"><div class="avatar"><span>BA</span></div><figcaption>BOURASS</figcaption></figure>
        <div class="tile"></div>
      </aside>
    </div>
  </section>
</div>
<svg class="desktop" viewBox="0 779 1154 14">
  <path d="M0 779h1154v14H0z" fill="#d1e4ec"/><path d="M48 781h428v12H48z" fill="#fff"/><path d="M476 781h2v12h-2z" fill="#c3c8ca"/><path d="M555 781h73v12h-73z" fill="#f0f6fa"/>
  <path d="M371 793q0-5 7-4 4-8 11-3 6-1 5 4-5 3-8 3zM435 793q2-4 9-2 3-7 10-3 10-3 10 5z" fill="#99c6dc"/>
  <ellipse cx="591" cy="797" rx="13" ry="6" fill="#e83e38"/><path d="M654 791q8 0 14 3h-14z" fill="#7a6b91"/><path d="M742 793l5-2v2z" fill="#f6df00"/><ellipse cx="891" cy="797" rx="11" ry="5.500" fill="#fc2546"/><path d="M958 793q0-2 2-2h12q2 0 2 2z" fill="#ff3c20"/>
  <path d="M0 779h1154v2H0z" fill="#08aeea"/>
</svg>
</body>
</html>
```
FILE: styles.css
```css
* { box-sizing: border-box; }
body { margin: 0; width: 1154px; height: 793px; overflow: hidden; background: #1f1f1f; color: #d6d6d6; font-family: "Noto Sans", "Open Sans", sans-serif; display: flex; flex-direction: column; }
svg { display: block; flex: none; }
span, label, a { white-space: nowrap; }
.strip { height: 14px; flex: none; background: linear-gradient(#0a0a0a 12px, #292929 12px, #292929 13px, #101010 13px); }
.notice { height: 53px; flex: none; background: #333; border-bottom: 1px solid #121212; padding: 15px 0 0 629px; font-size: 20px; line-height: 26px; letter-spacing: -.13px; }
.main { height: 712px; flex: none; display: flex; }
.rail { width: 76px; background: #0a0a0a; flex: none; }
.rail-item { width: 50px; height: 84px; padding-top: 14px; display: flex; flex-direction: column; align-items: center; color: #adadad; font-size: 14.200px; letter-spacing: -.15px; }
.rail-item svg { width: 33px; height: 33px; fill: none; stroke: #adadad; stroke-width: 2; stroke-linejoin: round; stroke-linecap: round; }
.rail-item span { line-height: 20px; margin-top: 5px; }
.rail-item.more { padding-top: 26px; }
.rail-item.more svg { width: 28px; height: 28px; }
.rail-item .dots { fill: #adadad; stroke: none; }
.meeting { width: 1078px; overflow: hidden; }
.bar { height: 90px; background: #292929; border-bottom: 1px solid #232323; display: flex; }
.shield { width: 24px; height: 26px; margin: 32px 0 0 30px; fill: none; stroke: #fff; stroke-width: 1.600; stroke-linejoin: round; }
.timer { flex: none; width: 100px; margin: 33px 0 0 30px; font-size: 20px; line-height: 28px; letter-spacing: -.3px; }
.controls { flex: none; margin-left: 481px; display: grid; grid-template-columns: 84px 84px 96px 47px 72px; column-gap: 14px; }
.control { position: relative; height: 87px; padding-top: 16px; display: flex; flex-direction: column; align-items: center; font-size: 16px; letter-spacing: -.4px; }
.control:nth-child(4) { margin: 0 -12px 0 12px; }
.control:nth-child(5) { margin: 0 -24px 0 24px; align-items: flex-start; }
.control:nth-child(5) svg { margin-left: 19px; }
.control svg { width: 34px; height: 34px; fill: none; stroke: #d6d6d6; stroke-width: 1.600; stroke-linejoin: round; }
.control .arrow, .control .dots { fill: #d6d6d6; stroke: none; }
.control > span { line-height: 24px; margin-top: 5px; }
.control.active { border-bottom: 3px solid #7f85f5; }
.badge { position: absolute; left: 44px; top: 14px; width: 21px; height: 21px; border-radius: 50%; background: #da3b01; color: #fff; text-align: center; font-size: 14px; line-height: 21px; }
.content { height: 622px; display: flex; background: radial-gradient(circle at 1067px 105px, #30313f 58px, #24242a 85px, #1f1f1f 120px); }
.share { position: relative; width: 956px; height: 539px; margin: 42px 0 0 7px; flex: none; color: #333; background: #a9a9a9; }
.titlebar { height: 14px; background: #fff; display: flex; align-items: center; padding-left: 29px; color: #111; font-size: 7px; }
.orb { position: absolute; left: 0; top: -1px; width: 28px; height: 28px; }
.quick { width: 102px; height: 14px; }
.titlebar strong { margin-left: 344px; width: 66px; white-space: nowrap; }
.winbtns { width: 70px; height: 14px; margin-left: 338px; fill: none; stroke: #333; stroke-width: .8; }
.tabstrip { height: 15px; background: #f0f2fc; display: flex; border-top: 1px solid #ddd; font-size: 7px; line-height: 15px; }
.tab { width: 38px; height: 15px; margin-left: 29px; background: #fff; border: 1px solid #ccc; border-bottom: 0; text-align: center; line-height: 14px; }
.style { margin: 0 4px 0 auto; }
.style i { display: inline-block; margin-left: 2px; border: 2px solid transparent; border-top-color: #222; border-bottom: 0; vertical-align: 2px; }
.info { width: 10px; height: 10px; margin: 2px 2px 0 0; }
.ribbon { height: 56px; background: #f0f0f0; border-bottom: 1px solid #999; display: flex; padding-left: 3px; gap: 2px; font-size: 6.600px; }
.group { height: 55px; flex: none; border-right: 1px solid #ccc; border-left: 1px solid #ddd; display: flex; flex-direction: column; }
.group .body { height: 43px; width: 100%; flex: none; }
.group footer { height: 11px; background: #bccad9; line-height: 12px; text-align: center; }
.formalism { width: 77px; } .display { width: 154px; } .pointer { width: 58px; } .mcd { width: 271px; margin-left: -1px; } .illus { width: 185px; } .edit { width: 121px; margin-left: -1px; } .windows { width: 29px; margin-left: -1px; }
.pixel { font: bold 7px "DejaVu Sans Mono", monospace; }
.tool .pixel { font-size: 4.500px; }
.serif { font-family: "Liberation Serif", serif; }
.view-body { display: grid; grid-template-columns: 63px 88px; }
.checks { display: grid; grid-template-rows: repeat(3, 12.800px); padding: 2px 0 0 3px; border-right: 1px solid #ccc; height: 41px; letter-spacing: -.05px; }
.checks label { display: flex; align-items: center; gap: 2px; }
.checks i { width: 10px; height: 10px; border: 1px solid #777; border-radius: 2px; background: #fff; font-style: normal; line-height: 8px; text-align: center; font-size: 7px; }
.checks .on { background: #0864b5; border-color: #0864b5; color: #fff; }
.zoom { display: grid; grid-template-columns: 61px 20px; grid-template-rows: repeat(3, 12.500px); align-items: center; justify-items: start; padding: 2px 0 0 4px; }
.zoom span:nth-child(even) { justify-self: end; }
.fit { width: 11px; height: 9px; fill: none; stroke: #222; }
.slider { width: 61px; height: 10px; }
.tools { display: grid; padding: 1px 0 0 1px; }
.tool { height: 42px; display: flex; flex-direction: column; align-items: center; line-height: 11px; }
.tool svg { width: 20px; height: 20px; margin: 2px 0 1px; }
.selected { background: #d0e6f8; border: 1px solid #78b4e2; }
.selected svg { margin-top: 1px; }
.pointer .tools { padding-left: 0; grid-template-columns: 30px 25px; }
.mcd .tools { grid-template-columns: 26px 34px 30px 34px 26px 23px 26px 27px 40px; padding-left: 1px; letter-spacing: -.08px; }
.illus .tools { grid-template-columns: 24px 26px 25px 31px 24px 27px 22px; }
.windows { align-items: center; }
.windows svg { width: 20px; height: 20px; margin: 3px 0 2px; }
.windows i { margin-top: 2px; border: 3px solid transparent; border-top-color: #111; }
.mdi { height: 424px; padding: 2px 3px 19px 1px; background: #a9a9a9; border-bottom: 1px solid #fff; }
.child { height: 403px; background: #b4d0ee; border: 1px solid #40677b; padding: 0 4px 4px 4px; }
.child-title { height: 19px; margin: 0 -4px; padding: 0 5px 0 5px; background: linear-gradient(#94b5d8, #b1cceb); border-bottom: 1px solid #6b7c8d; display: flex; align-items: center; font-size: 7.500px; color: #222; }
.child-title > svg { width: 11px; height: 11px; }
.buttons { margin-left: auto; display: flex; gap: 1px; }
.buttons b { width: 21px; height: 11px; border: 1px solid #758da5; border-radius: 2px; background: linear-gradient(#dce9f6, #9eb9d5); display: grid; place-items: center; }
.buttons svg { width: 10px; height: 8px; }
.buttons .close { background: linear-gradient(#e48c77, #bf3c21); border-color: #8c392d; }
.diagram { width: 942px; height: 378px; background: #f0f0f0; border-left: 1px solid #888; }
.links { fill: none; stroke: #444; stroke-width: .8; }
.mult { fill: #222; stroke: none; font-size: 7.300px; text-anchor: middle; }
.shadow { fill: #c4c4c4; }
.entities { fill: #fff67d; stroke: #615a31; }
.head { fill: #ffdd7c; }
.assocs { fill: #00e5ff; stroke: #09606d; }
.strong { fill: #08acee; }
.picked { fill: #00e5ff; stroke: #9c3538; }
.names { font-size: 7.700px; font-weight: bold; fill: #171717; }
.attrs { font-size: 7.400px; fill: #30301a; }
.taskbar { position: relative; height: 30px; background: linear-gradient(90deg, #2b251d, #32271a 35%, #27200f 55%, #20231a 75%, #241f12); display: flex; padding-left: 77px; }
.apps { width: 630px; display: grid; grid-template-columns: repeat(23, 27.450px); justify-items: center; padding-top: 5px; }
.apps svg { width: 18px; height: 18px; }
.apps .current { width: 24px; height: 24px; margin-top: -3px; padding: 3px; background: #41372a; border-radius: 3px; }
.app-t { font-family: "Noto Sans", sans-serif; font-weight: bold; }
.app-t:not([font-size]) { font-size: 9px; }
.marks { position: absolute; left: 77px; top: 24px; width: 640px; height: 3px; }
.tray { display: flex; align-items: center; color: #eee; font-size: 6.800px; padding-left: 42px; height: 28px; }
.chev { width: 8px; height: 8px; }
.mic { width: 20px; height: 25px; margin-left: 6px; background: #42b4ff; border-radius: 3px; display: grid; place-items: center; }
.mic svg { width: 10px; height: 12px; }
.lang { width: 26px; margin-left: 7px; }
.status { width: 41px; height: 12px; margin-left: -1px; }
.tray time { width: 46px; margin-left: 2px; display: grid; text-align: right; line-height: 10px; letter-spacing: .1px; }
.bell { width: 10px; height: 12px; margin-left: 5px; }
.copilot { width: 16px; height: 16px; margin-left: 9px; }
.pill { position: absolute; top: 526px; height: 36px; border-radius: 5px; background: rgba(10, 10, 10, .78); color: #fff; font-size: 17px; line-height: 35px; }
.presenter { left: 12px; width: 181px; padding-left: 9px; letter-spacing: .1px; }
.zoomer { left: 205px; width: 99px; }
.people { width: 109px; margin-left: 6px; overflow: hidden; flex: none; color: #fff; }
.person { margin: 0; height: 172px; padding: 46px 0 0 39px; }
.avatar { width: 119px; height: 119px; border-radius: 50%; border: 4px solid #7f85f5; padding: 3px; }
.avatar span { display: block; height: 105px; border-radius: 50%; background: #e9e3ef; color: #533f61; padding-left: 32px; font-size: 40px; font-weight: 600; line-height: 103px; letter-spacing: 4px; }
.speaking .avatar { background: #1f1f24; }
.person figcaption { font-size: 16.500px; letter-spacing: -.3px; line-height: 24px; margin: 4px 0 0 -10px; white-space: nowrap; }
.second { height: 244px; padding-top: 39px; }
.second .avatar { border-color: transparent; }
.second .avatar span { background: #dceff2; color: #33696c; padding-left: 25px; letter-spacing: 0; }
.second figcaption { margin: 4px 0 0 10px; letter-spacing: .4px; }
.tile { height: 200px; background: #333; }
.desktop { width: 1154px; height: 14px; }
```
